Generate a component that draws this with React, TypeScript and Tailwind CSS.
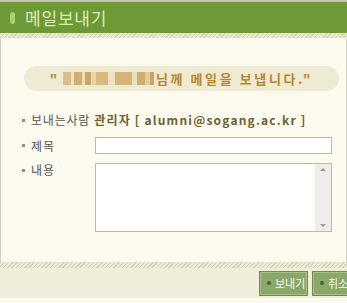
import React from "react";

const font = { fontFamily: '"Noto Sans CJK KR", "Noto Sans", sans-serif' };

function Blur() {
  const blocks: [number, string][] = [
    [8, "#d9bf86"], [3, "#efe4c0"], [8, "#cfb073"], [3, "#eadcb4"], [6, "#c9a865"], [5, "#e6d6a8"],
    [12, "#d6ba7e"], [7, "#ece2c2"], [17, "#d3b577"], [5, "#eadfbc"], [8, "#cdae70"], [5, "#e0cc98"], [4, "#c7a660"],
  ];
  return (
    <span className="inline-flex h-[13px] items-stretch">
      {blocks.map(([w, c], i) => (
        <span key={i} style={{ width: w, background: c }} />
      ))}
    </span>
  );
}

export default function App() {
  return (
    <div className="w-[347px] h-[303px] overflow-hidden bg-[#fdfbee] border-t-2 border-[#c4c4bc]" style={font}>
      <div className="h-[31px] bg-[#6d9a37] flex items-center pl-[10px]">
        <span className="w-[5px] h-[12px] rounded-full bg-[#a8d070] mr-[10px]" />
        <span className="text-[17px] leading-none text-[#dcedb8] tracking-[0.8px]">메일보내기</span>
      </div>
      <div className="h-[5px] bg-[repeating-linear-gradient(135deg,#d6d2b6_0_1px,#ece9d4_1px_3px)]" />
      <div className="border-l border-r border-[#cfcdbd] h-[224px] pt-[28px]">
        <div className="ml-[23px] w-[315px] h-[25px] rounded-full bg-[#efebd2] flex items-center justify-center">
          <span className="text-[13px] font-bold text-[#b5892a] tracking-[2.6px] flex items-center">
            <span className="mr-[3px]">"</span>
            <Blur />
            <span className="ml-[2px]">님께 메일을 보냅니다."</span>
          </span>
        </div>
        <div className="mt-[21px] flex items-center h-[16px] pl-[21px]">
          <span className="w-[3px] h-[3px] bg-[#8c9a6a] mr-[6px]" />
          <span className="text-[12px] text-[#555] tracking-[0.8px]">보내는사람</span>
          <span className="ml-[4px] text-[12px] font-bold text-[#6d6233] tracking-[1.2px]">관리자 [ alumni@sogang.ac.kr ]</span>
        </div>
        <div className="mt-[9px] flex items-center pl-[21px] h-[17px]">
          <span className="w-[3px] h-[3px] bg-[#8c9a6a] mr-[6px]" />
          <span className="text-[12px] text-[#555] w-[64px] tracking-[1px]">제목</span>
          <div className="w-[237px] h-[17px] bg-white border border-[#bdb9a5]" />
        </div>
        <div className="mt-[9px] flex items-start pl-[21px]">
          <span className="w-[3px] h-[3px] bg-[#8c9a6a] mr-[6px] mt-[6px]" />
          <span className="text-[12px] text-[#555] w-[64px] leading-[14px] tracking-[1px]">내용</span>
          <div className="w-[237px] h-[69px] bg-white border border-[#bdb9a5] flex justify-end">
            <div className="w-[16px] h-full bg-[#ededea] flex flex-col items-center justify-between py-[4px]">
              <span className="w-0 h-0 border-l-[3px] border-r-[3px] border-b-[3px] border-l-transparent border-r-transparent border-b-[#9a9a9a]" />
              <span className="w-0 h-0 border-l-[3px] border-r-[3px] border-t-[3px] border-l-transparent border-r-transparent border-t-[#9a9a9a]" />
            </div>
          </div>
        </div>
      </div>
      <div className="h-[6px] bg-[repeating-linear-gradient(135deg,#d6d2b6_0_1px,#ece9d4_1px_3px)]" />
      <div className="h-[30px] bg-[#f0eddb] flex items-center gap-[6px] pl-[260px] whitespace-nowrap">
        <button className="shrink-0 h-[23px] w-[47px] pl-[6px] bg-[#8ba86a] border border-[#a8c08c] outline outline-1 outline-[#6f8d50] flex items-center text-[11px] text-[#f4f7ec] whitespace-nowrap">
          <span className="shrink-0 w-[4px] h-[4px] rounded-full bg-[#3e6b1f] mr-[4px]" />보내기
        </button>
        <button className="shrink-0 h-[23px] w-[42px] pl-[6px] bg-[#8ba86a] border border-[#a8c08c] outline outline-1 outline-[#6f8d50] flex items-center text-[11px] text-[#f4f7ec] whitespace-nowrap">
          <span className="shrink-0 w-[4px] h-[4px] rounded-full bg-[#3e6b1f] mr-[4px]" />취소
        </button>
      </div>
    </div>
  );
}
